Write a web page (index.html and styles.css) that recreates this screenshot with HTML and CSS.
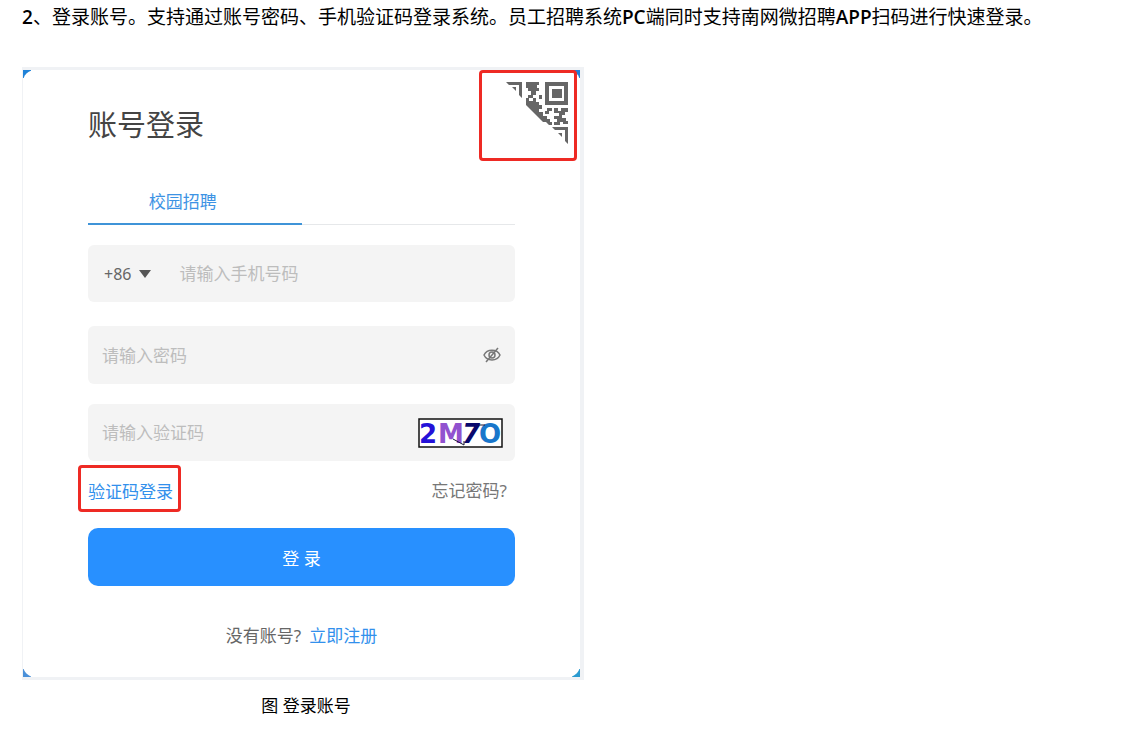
FILE: index.html
```html
<!DOCTYPE html>
<html lang="zh-CN">
<head>
<meta charset="utf-8">
<meta name="viewport" content="width=device-width, initial-scale=1">
<title>登录账号</title>
<link rel="stylesheet" href="styles.css">
</head>
<body>
<main class="doc">
  <p class="step"><b>2</b>、登录账号。支持通过账号密码、手机验证码登录系统。员工招聘系统<b>PC</b>端同时支持南网微招聘<b>APP</b>扫码进行快速登录。</p>
  <figure class="figure">
    <div class="frame">
      <form class="card">
        <button class="qr" type="button" aria-label="扫码登录">
          <svg width="63" height="64" viewBox="0 0 63 64" fill="#666" aria-hidden="true">
            <path d="M0 1H16V17L13 14V4H3Z M6 6H10V10Z"/>
            <path fill-rule="evenodd" d="M39 1H62V24H39Z M43 5V20H58V5Z"/>
            <path d="M46 8H56V17H46Z"/>
            <path d="M20 1H33V4H31V7H33V10H30V14H27V17H22V14H25V10H22V7H20Z"/>
            <path d="M20 17H23V20H27V17H30V21H33V24H36V28H33V31H37V35H41V38H44V41H37L20 24Z"/>
            <path d="M33 14H36V18H33Z M41 27H46V30H43V33H39V30H41Z M48 27H52V30H55V27H62V31H59V34H56V37H60V40H62V43H57V41H54V44H48V41H51V38H48V35H53V32H48Z M40 41H46V44H43Z"/>
            <path d="M46 46H62V63L59 60V49H49Z M52 52H56V56Z"/>
          </svg>
        </button>
        <h1 class="title">账号登录</h1>
        <div class="tabs"><button class="tab" type="button">校园招聘</button></div>
        <div class="field">
          <button class="code" type="button" aria-label="国家区号">+86
            <svg width="12" height="8" viewBox="0 0 12 8" aria-hidden="true"><path d="M0 0H12L6 8Z" fill="#555"/></svg>
          </button>
          <input class="input" type="tel" aria-label="手机号码" placeholder="请输入手机号码">
        </div>
        <div class="field field-password">
          <input class="input" type="password" aria-label="密码" placeholder="请输入密码">
          <button class="eye" type="button" aria-label="显示密码">
            <svg width="18" height="16" viewBox="0 0 18 16" fill="none" stroke="#777" stroke-width="1.5" aria-hidden="true"><path d="M1 8C4 1.500 14 1.500 17 8C14 14.500 4 14.500 1 8Z"/><circle cx="9" cy="8" r="3"/><path d="M3 15L15 1"/></svg>
          </button>
        </div>
        <div class="field">
          <input class="input" type="text" aria-label="验证码" placeholder="请输入验证码">
          <svg class="captcha" width="85" height="30" viewBox="0 0 85 30" role="img" aria-label="图形验证码">
            <rect x="1" y="1" width="83" height="28" fill="#fff" stroke="#111" stroke-width="1.500"/>
            <g class="captcha-text">
              <text x="1" y="25" fill="#2411d8">2</text>
              <text x="20" y="25" fill="#9152cf">M</text>
              <text x="44" y="25" fill="#08086d" font-style="italic">7</text>
              <text x="61" y="25" fill="#1976cb">O</text>
            </g>
            <path d="M35 21L46 27V23M61 7H67" fill="none" stroke="#151533"/>
          </svg>
        </div>
        <div class="links">
          <a class="link marked" href="#sms">验证码登录</a>
          <a class="forgot" href="#forgot">忘记密码?</a>
        </div>
        <button class="submit" type="submit">登 录</button>
        <p class="register">没有账号?<a class="link" href="#register">立即注册</a></p>
      </form>
    </div>
    <figcaption class="caption">图 登录账号</figcaption>
  </figure>
</main>
</body>
</html>
```
FILE: styles.css
```css
* {
  box-sizing: border-box;
}

body {
  margin: 0;
  background: #fff;
  color: #000;
  font-family: "Open Sans", "Noto Sans CJK SC", sans-serif;
}

button,
input {
  border: 0;
  padding: 0;
  background: none;
  color: inherit;
  font: inherit;
}

a {
  text-decoration: none;
}

.doc {
  padding: 3px 22px 12px;
}

.step {
  margin: 0 0 36px;
  font-size: 19px;
  line-height: 28px;
}

.step b {
  font-weight: 600;
}

.figure {
  max-width: 562px;
  margin: 0;
}

.frame {
  border: solid #f0f2f5;
  border-width: 3px 4px 3px 1px;
  background:
    linear-gradient(#1f82d8, #1f82d8) 0 0 / 8px 8px no-repeat,
    linear-gradient(#1f82d8, #1f82d8) 100% 0 / 8px 8px no-repeat,
    linear-gradient(#4a90d9, #4a90d9) 0 100% / 8px 8px no-repeat,
    linear-gradient(#2b9bd0, #2b9bd0) 100% 100% / 8px 8px no-repeat;
}

.card {
  position: relative;
  padding: 32px 65px 28px 65px;
  border-radius: 12px;
  background: #fff;
  color: #666;
  font-family: "Noto Sans", "Noto Sans CJK SC", sans-serif;
  font-size: 17px;
}

.qr {
  position: absolute;
  top: 0;
  right: 3px;
  display: flex;
  padding: 8px 5px 13px 24px;
  border: 3px solid #ee2a24;
  border-radius: 4px;
}

.title {
  margin: 0 0 36px;
  color: #444;
  font-size: 29px;
  font-weight: 400;
  line-height: 46px;
}

.tabs {
  display: flex;
  margin-bottom: 20px;
  box-shadow: inset 0 -1px #e6e8ea;
}

.tab {
  width: 50%;
  padding: 4px 24px 8px 0;
  border-bottom: 2px solid #3f94d8;
  color: #3d93e4;
  line-height: 27px;
}

.field {
  display: flex;
  align-items: center;
  height: 57px;
  margin-bottom: 24px;
  padding: 0 12px 0 14px;
  border-radius: 6px;
  background: #f4f4f4;
}

.field-password {
  height: 58px;
  margin-bottom: 20px;
}

.input {
  flex: 1;
  min-width: 0;
  outline: 0;
}

.input::placeholder {
  color: #bdbdbd;
  opacity: 1;
}

.code {
  display: flex;
  align-items: center;
  gap: 8px;
  margin-right: 28px;
  padding-left: 2px;
  font-size: 16px;
}

.eye {
  display: flex;
  padding-right: 2px;
}

.captcha-text {
  font: bold 26px "DejaVu Sans", sans-serif;
}

.links {
  display: flex;
  justify-content: space-between;
  align-items: center;
  margin: -20px 8px 16px -10px;
}

.marked {
  padding: 11px 5px 4px 7px;
  border: 3px solid #ee2a24;
  border-radius: 4px;
  line-height: 26px;
}

.forgot {
  padding-top: 2px;
  color: #777;
}

.link {
  color: #3290ec;
}

.submit {
  display: block;
  width: 100%;
  height: 58px;
  border-radius: 10px;
  background: #2890ff;
  color: #fff;
}

.register {
  margin: 37px 0 0;
  line-height: 26px;
  text-align: center;
}

.register .link {
  margin-left: 8px;
}

.caption {
  padding-left: 6px;
  margin-top: 12px;
  font-size: 17px;
  line-height: 28px;
  text-align: center;
}
```
